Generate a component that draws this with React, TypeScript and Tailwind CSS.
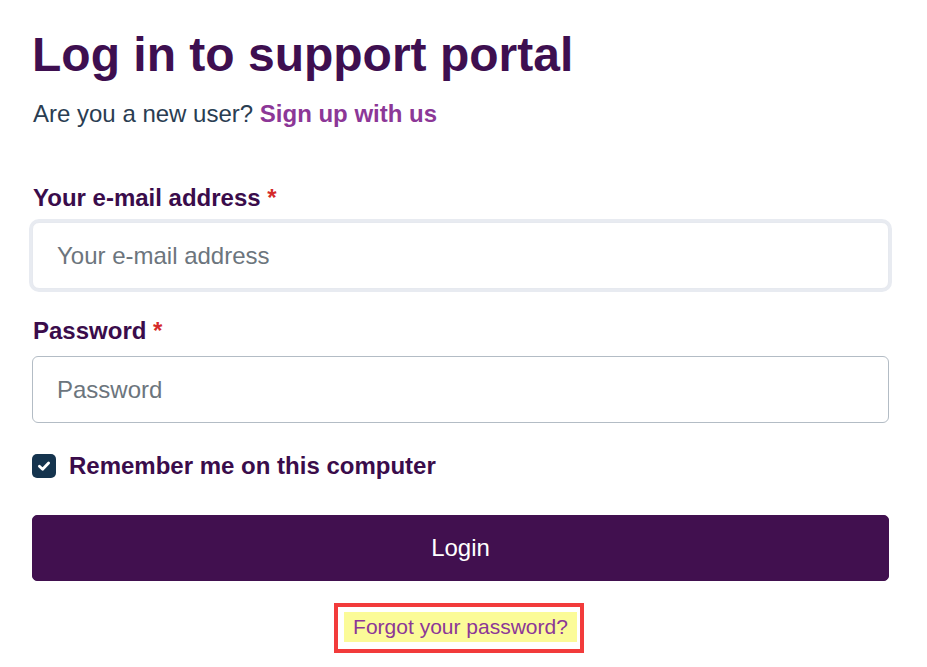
import React from "react";

export default function App() {
  return (
    <div
      className="min-h-screen bg-white"
      style={{ fontFamily: '"Liberation Sans", Arial, Helvetica, sans-serif' }}
    >
      <div className="w-[857px] ml-[32px] pt-[26px]">
        <h1 className="text-[48px] leading-[1.2] font-bold text-[#3e0f50]">
          Log in to support portal
        </h1>
        <p className="mt-[12px] text-[24px] leading-[1.5] text-[#2a3d52] ml-[1px]">
          Are you a new user?{" "}
          <a href="#" className="font-bold text-[#8c3797]">
            Sign up with us
          </a>
        </p>

        <form onSubmit={(e) => e.preventDefault()}>
          <label className="block mt-[48px] text-[24px] leading-[1.5] font-bold text-[#3a0c4b] ml-[1px]">
            Your e-mail address <span className="text-[#d42a2a]">*</span>
          </label>
          <input
            type="email"
            placeholder="Your e-mail address"
            className="block mt-[6px] w-full h-[67px] pt-[2px] rounded-[7px] border border-[#e6e9ef] shadow-[0_0_0_3px_#e8ebf1] px-[24px] text-[24px] text-[#212529] placeholder:text-[#6c757d] outline-none bg-white"
          />

          <label className="block mt-[24px] text-[24px] leading-[1.5] font-bold text-[#3a0c4b] ml-[1px]">
            Password <span className="text-[#d42a2a]">*</span>
          </label>
          <input
            type="password"
            placeholder="Password"
            className="block mt-[7px] w-full h-[67px] pt-[2px] rounded-[6px] border border-[#b3bcc5] px-[24px] text-[24px] text-[#212529] placeholder:text-[#6c757d] outline-none bg-white"
          />

          <div className="mt-[25px] flex items-center h-[36px]">
            <span className="w-[24px] h-[24px] rounded-[5px] bg-[#15344e] flex items-center justify-center">
              <svg width="16" height="16" viewBox="0 0 16 16" fill="none">
                <path
                  d="M3.4 8.2 L6.6 11.2 L12.6 5"
                  stroke="white"
                  strokeWidth="2.8"
                  strokeLinecap="round"
                  strokeLinejoin="round"
                />
              </svg>
            </span>
            <span className="ml-[13px] text-[24px] leading-[1.5] font-bold text-[#3a0c4b]">
              Remember me on this computer
            </span>
          </div>

          <button
            type="submit"
            className="mt-[31px] w-full h-[66px] rounded-[5px] bg-[#41104f] text-white text-[24px] leading-[1.5] border border-[#41104f]"
          >
            Login
          </button>

          <div className="mt-[22px] flex justify-center">
            <div className="ml-[-3px] border-[4px] border-[#f23b3b] pl-[6px] pr-[3px] pt-[5px] pb-[7px]">
              <a
                href="#"
                className="block bg-[#fbfb98] px-[9px] text-[21px] leading-[30px] text-[#8c3797]"
              >
                Forgot your password?
              </a>
            </div>
          </div>
        </form>
      </div>
    </div>
  );
}
